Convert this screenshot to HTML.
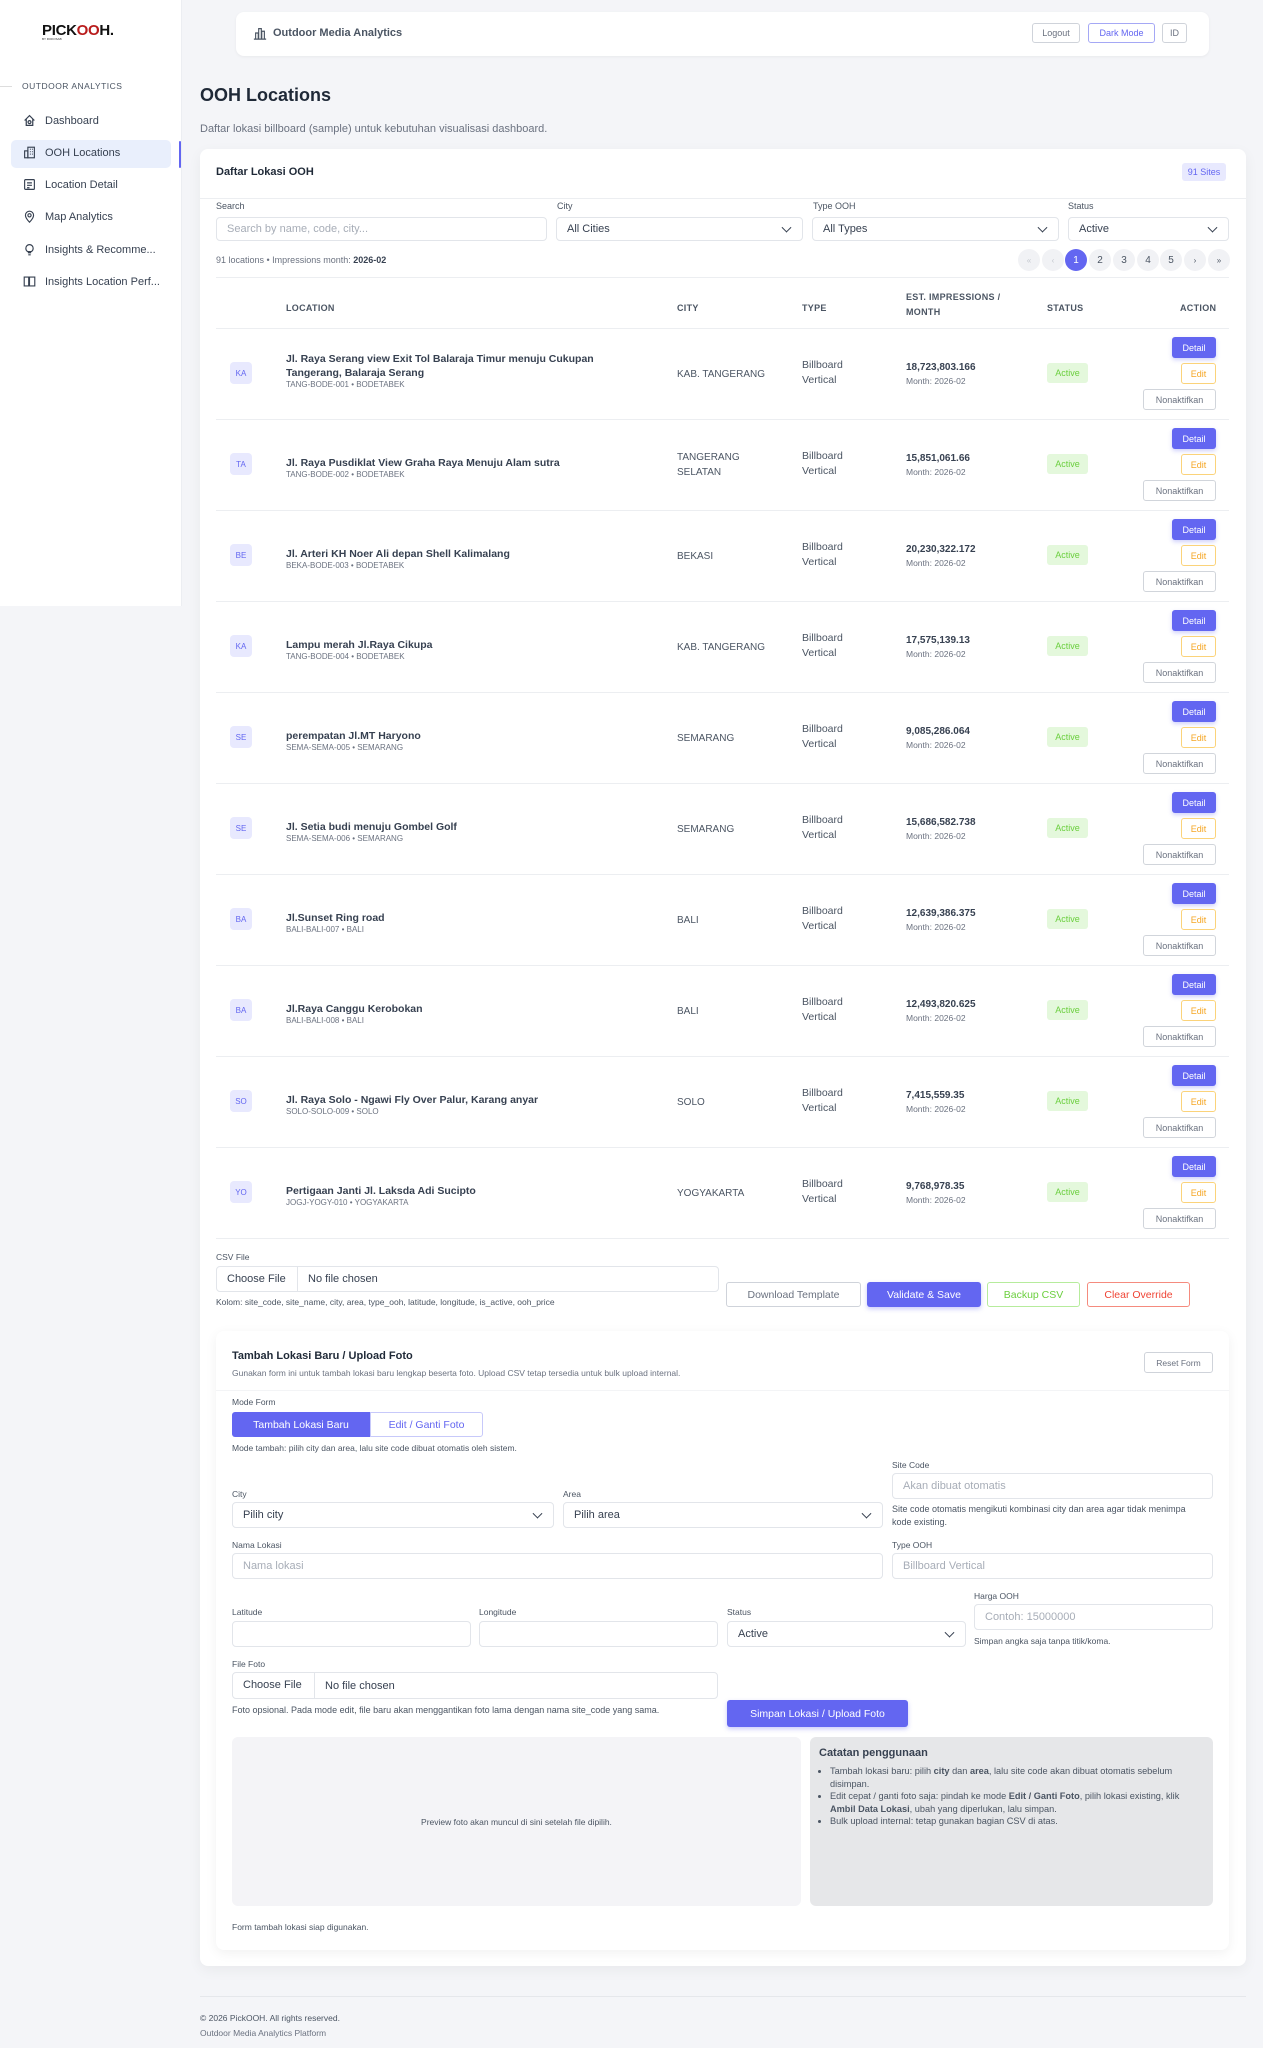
<!DOCTYPE html>
<html><head><meta charset="utf-8">
<style>
*{box-sizing:border-box;margin:0;padding:0}
body{width:1263px;height:2048px;background:#f4f5f8;font-family:"Liberation Sans",sans-serif;color:#374151;position:relative;overflow:hidden}
.a{position:absolute}
.sb{left:0;top:0;width:182px;height:606px;background:#fff;border-right:1px solid #eceef2}
.nav{left:23px;font-size:11px;color:#374151;display:flex;align-items:center;gap:9px}
.nav svg{width:13px;height:13px}
.card{background:#fff;border-radius:8px}
.btn{position:absolute;display:flex;align-items:center;justify-content:center;border-radius:3px;font-size:10px;background:#fff}
.lbl{position:absolute;font-size:9px;color:#4b5563}
.inp{position:absolute;border:1px solid #e2e5ea;border-radius:4px;background:#fff;font-size:11px;color:#374151;display:flex;align-items:center;padding-left:10px}
.ph{color:#a7adb7}
.chev{position:absolute;right:12px;top:50%;width:7px;height:7px;border-right:1.6px solid #374151;border-bottom:1.6px solid #374151;transform:translateY(-70%) rotate(45deg)}
.th{position:absolute;top:303px;font-size:9px;font-weight:bold;color:#4b5563;letter-spacing:.3px}
.pg{position:absolute;top:249px;width:22px;height:22px;border-radius:50%;background:#f1f2f5;font-size:10px;color:#4b5563;display:flex;align-items:center;justify-content:center}
.hr{position:absolute;height:1px;background:#eceef1}
.row .av{position:absolute;left:230px;width:22px;height:22px;border-radius:4px;background:#e8e9fe;color:#6366f1;font-size:8px;display:flex;align-items:center;justify-content:center}
.t{position:absolute;font-size:10px}
</style></head><body>

<div class="a sb"></div>
<div class="a" style="left:42px;top:22px;font-size:15px;font-weight:bold;letter-spacing:-0.3px;color:#111">PICK<span style="color:#b91c1c">OO</span>H.</div>
<div class="a" style="left:42px;top:37px;font-size:3px;color:#333">BY ROKOSAB</div>
<div class="a" style="left:0;top:86px;width:12px;height:1px;background:#ddd"></div>
<div class="a" style="left:22px;top:81px;font-size:8.5px;color:#4b5563;letter-spacing:.5px">OUTDOOR ANALYTICS</div>
<div class="a" style="left:11px;top:140px;width:160px;height:28px;background:#e9effc;border-radius:5px"></div>
<div class="a" style="left:179px;top:141px;width:2px;height:27px;background:#6366f1;border-radius:2px"></div>
<div class="a nav" style="top:114px"><svg viewBox="0 0 16 16" fill="none" stroke="#374151" stroke-width="1.5"><path d="M2 8L8 2l6 6M4 6.5V14h8V6.5"/><circle cx="8" cy="10" r="1.8"/></svg>Dashboard</div>
<div class="a nav" style="top:146px"><svg viewBox="0 0 16 16" fill="none" stroke="#374151" stroke-width="1.4"><rect x="6" y="1.5" width="8" height="13"/><rect x="2" y="6" width="4" height="8.5"/><path d="M8.5 4h1M11 4h1M8.5 7h1M11 7h1M8.5 10h1M11 10h1"/></svg>OOH Locations</div>
<div class="a nav" style="top:178px"><svg viewBox="0 0 16 16" fill="none" stroke="#374151" stroke-width="1.4"><rect x="2" y="2" width="12" height="12" rx="1"/><path d="M5 6h6M5 9h6M5 12h3"/></svg>Location Detail</div>
<div class="a nav" style="top:210px"><svg viewBox="0 0 16 16" fill="none" stroke="#374151" stroke-width="1.4"><path d="M8 15s5-5 5-8.5A5 5 0 003 6.5C3 10 8 15 8 15z"/><circle cx="8" cy="6.5" r="2"/></svg>Map Analytics</div>
<div class="a nav" style="top:243px"><svg viewBox="0 0 16 16" fill="none" stroke="#374151" stroke-width="1.4"><path d="M6 12h4M6.5 14.5h3M5.5 10.5C4 9.5 3.5 8 3.5 6.5a4.5 4.5 0 019 0c0 1.5-.5 3-2 4z"/></svg>Insights &amp; Recomme...</div>
<div class="a nav" style="top:275px"><svg viewBox="0 0 16 16" fill="none" stroke="#374151" stroke-width="1.4"><path d="M1.5 2.5h5.5v11H1.5zM8 2.5h6.5v11H8zM7 2.5v11"/></svg>Insights Location Perf...</div>

<div class="a card" style="left:236px;top:12px;width:973px;height:44px;box-shadow:0 1px 3px rgba(0,0,0,.05)"></div>
<svg class="a" style="left:253px;top:26px" width="14" height="14" viewBox="0 0 16 16" fill="none" stroke="#4b5563" stroke-width="1.3"><path d="M1 15h14M3 15V8h3v7M6.5 15V3h3v12M10 15V6h3v9"/></svg>
<div class="a" style="left:273px;top:27px;font-size:11px;font-weight:bold;color:#4b5563">Outdoor Media Analytics</div>
<div class="btn" style="left:1032px;top:23px;width:48px;height:20px;border:1px solid #cfd3da;color:#6b7280;font-size:9px">Logout</div>
<div class="btn" style="left:1088px;top:23px;width:67px;height:20px;border:1px solid #a5a8f5;color:#6366f1;font-size:9px">Dark Mode</div>
<div class="btn" style="left:1162px;top:23px;width:25px;height:20px;border:1px solid #cfd3da;color:#6b7280;font-size:9px">ID</div>

<div class="a" style="left:200px;top:85px;font-size:18px;font-weight:bold;color:#1f2937">OOH Locations</div>
<div class="a" style="left:200px;top:123px;font-size:11px;color:#6b7280">Daftar lokasi billboard (sample) untuk kebutuhan visualisasi dashboard.</div>

<div class="a card" style="left:200px;top:149px;width:1046px;height:1817px;box-shadow:0 4px 14px rgba(0,0,0,.05)"></div>
<div class="a" style="left:216px;top:166px;font-size:11px;font-weight:bold;color:#1f2937">Daftar Lokasi OOH</div>
<div class="a" style="left:1182px;top:163px;width:44px;height:18px;background:#e8e9fe;border-radius:3px;color:#6366f1;font-size:9px;display:flex;align-items:center;justify-content:center">91 Sites</div>
<div class="hr" style="left:200px;top:198px;width:1046px"></div>

<div class="lbl" style="left:216px;top:201px">Search</div>
<div class="inp" style="left:216px;top:217px;width:331px;height:24px"><span class="ph">Search by name, code, city...</span></div>
<div class="lbl" style="left:557px;top:201px">City</div>
<div class="inp" style="left:556px;top:217px;width:247px;height:24px">All Cities<i class="chev"></i></div>
<div class="lbl" style="left:813px;top:201px">Type OOH</div>
<div class="inp" style="left:812px;top:217px;width:247px;height:24px">All Types<i class="chev"></i></div>
<div class="lbl" style="left:1068px;top:201px">Status</div>
<div class="inp" style="left:1068px;top:217px;width:161px;height:24px">Active<i class="chev"></i></div>

<div class="a" style="left:216px;top:255px;font-size:9px;color:#6b7280">91 locations • Impressions month: <b style="color:#374151">2026-02</b></div>
<div class="pg" style="left:1018px;color:#c4c8cf;font-size:8px">«</div>
<div class="pg" style="left:1042px;color:#c4c8cf;font-size:8px">‹</div>
<div class="pg" style="left:1065px;background:#6366f1;color:#fff">1</div>
<div class="pg" style="left:1089px">2</div>
<div class="pg" style="left:1113px">3</div>
<div class="pg" style="left:1137px">4</div>
<div class="pg" style="left:1160px">5</div>
<div class="pg" style="left:1184px;font-size:8px">›</div>
<div class="pg" style="left:1208px;font-size:8px">»</div>
<div class="hr" style="left:216px;top:277px;width:1013px"></div>

<div class="th" style="left:286px">LOCATION</div>
<div class="th" style="left:677px">CITY</div>
<div class="th" style="left:802px">TYPE</div>
<div class="th" style="left:906px;top:290px;line-height:15px">EST. IMPRESSIONS /<br>MONTH</div>
<div class="th" style="left:1047px">STATUS</div>
<div class="th" style="left:1180px">ACTION</div>
<div class="hr" style="left:216px;top:328px;width:1013px"></div>

<div id="rows"></div>
<script>
var d=[["KA","Jl. Raya Serang view Exit Tol Balaraja Timur menuju Cukupan<br>Tangerang, Balaraja Serang","TANG-BODE-001 • BODETABEK","KAB. TANGERANG","18,723,803.166"],
["TA","Jl. Raya Pusdiklat View Graha Raya Menuju Alam sutra","TANG-BODE-002 • BODETABEK","TANGERANG<br>SELATAN","15,851,061.66"],
["BE","Jl. Arteri KH Noer Ali depan Shell Kalimalang","BEKA-BODE-003 • BODETABEK","BEKASI","20,230,322.172"],
["KA","Lampu merah Jl.Raya Cikupa","TANG-BODE-004 • BODETABEK","KAB. TANGERANG","17,575,139.13"],
["SE","perempatan Jl.MT Haryono","SEMA-SEMA-005 • SEMARANG","SEMARANG","9,085,286.064"],
["SE","Jl. Setia budi menuju Gombel Golf","SEMA-SEMA-006 • SEMARANG","SEMARANG","15,686,582.738"],
["BA","Jl.Sunset Ring road","BALI-BALI-007 • BALI","BALI","12,639,386.375"],
["BA","Jl.Raya Canggu Kerobokan","BALI-BALI-008 • BALI","BALI","12,493,820.625"],
["SO","Jl. Raya Solo - Ngawi Fly Over Palur, Karang anyar","SOLO-SOLO-009 • SOLO","SOLO","7,415,559.35"],
["YO","Pertigaan Janti Jl. Laksda Adi Sucipto","JOGJ-YOGY-010 • YOGYAKARTA","YOGYAKARTA","9,768,978.35"]];
var h="";
d.forEach(function(r,i){var c=373+91*i;var two=r[1].indexOf("<br>")>0;var nameTop=two?c-21:c-8;
h+='<div class="row"><div class="av" style="top:'+(c-11)+'px">'+r[0]+'</div>'+
'<div class="t" style="left:286px;top:'+nameTop+'px;font-weight:600;color:#374151;line-height:14px;font-size:10.5px">'+r[1]+'</div>'+
'<div class="t" style="left:286px;top:'+(nameTop+(two?28:14))+'px;font-size:8px;color:#6b7280">'+r[2]+'</div>'+
'<div class="t" style="left:677px;top:'+(r[3].indexOf("<br>")>0?c-14:c-6)+'px;color:#4b5563;line-height:15px">'+r[3]+'</div>'+
'<div class="t" style="left:802px;top:'+(c-15)+'px;color:#4b5563;line-height:15px;font-size:10.5px">Billboard<br>Vertical</div>'+
'<div class="t" style="left:906px;top:'+(c-11)+'px;font-weight:bold;color:#374151">'+r[4]+'</div>'+
'<div class="t" style="left:906px;top:'+(c+3)+'px;font-size:8.5px;color:#6b7280">Month: 2026-02</div>'+
'<div class="a" style="left:1047px;top:'+(c-10)+'px;width:41px;height:20px;background:#e4f8dc;color:#6bcf3e;font-size:9px;border-radius:3px;display:flex;align-items:center;justify-content:center">Active</div>'+
'<div class="btn" style="left:1172px;top:'+(c-36)+'px;width:44px;height:21px;background:#6366f1;color:#fff;font-size:9px;box-shadow:0 2px 4px rgba(99,102,241,.3)">Detail</div>'+
'<div class="btn" style="left:1181px;top:'+(c-10)+'px;width:35px;height:21px;border:1px solid #fbd37a;color:#f5a623;font-size:9px">Edit</div>'+
'<div class="btn" style="left:1143px;top:'+(c+16)+'px;width:73px;height:21px;border:1px solid #d1d5db;color:#6b7280;font-size:9px">Nonaktifkan</div>'+
'<div class="hr" style="left:216px;top:'+(c+46)+'px;width:1013px"></div></div>';});
document.getElementById("rows").innerHTML=h;
</script>

<div class="lbl" style="left:216px;top:1252px;font-size:8.5px">CSV File</div>
<div class="inp" style="left:216px;top:1266px;width:503px;height:26px;padding-left:0"><span style="display:inline-block;width:81px;height:100%;border-right:1px solid #e2e5ea;line-height:24px;padding-left:10px;color:#374151">Choose File</span><span style="padding-left:10px">No file chosen</span></div>
<div class="a" style="left:216px;top:1297px;font-size:8.5px;color:#4b5563">Kolom: site_code, site_name, city, area, type_ooh, latitude, longitude, is_active, ooh_price</div>
<div class="btn" style="left:726px;top:1282px;width:135px;height:25px;border:1px solid #cfd3da;color:#6b7280;font-size:10.5px">Download Template</div>
<div class="btn" style="left:867px;top:1282px;width:114px;height:25px;background:#6366f1;color:#fff;font-size:10.5px;box-shadow:0 2px 5px rgba(99,102,241,.35)">Validate &amp; Save</div>
<div class="btn" style="left:987px;top:1282px;width:93px;height:25px;border:1px solid #b6ec9c;color:#6bcf3e;font-size:10.5px">Backup CSV</div>
<div class="btn" style="left:1087px;top:1282px;width:103px;height:25px;border:1px solid #f58b7e;color:#ef4435;font-size:10.5px">Clear Override</div>

<div class="a card" style="left:216px;top:1331px;width:1013px;height:619px;box-shadow:0 3px 12px rgba(0,0,0,.06)"></div>
<div class="a" style="left:232px;top:1350px;font-size:11px;font-weight:bold;color:#1f2937">Tambah Lokasi Baru / Upload Foto</div>
<div class="a" style="left:232px;top:1368px;font-size:8.5px;color:#6b7280">Gunakan form ini untuk tambah lokasi baru lengkap beserta foto. Upload CSV tetap tersedia untuk bulk upload internal.</div>
<div class="btn" style="left:1144px;top:1352px;width:69px;height:21px;border:1px solid #cfd3da;color:#6b7280;font-size:8.5px">Reset Form</div>
<div class="hr" style="left:216px;top:1390px;width:1013px;background:#f3f4f6"></div>

<div class="lbl" style="left:232px;top:1397px;font-size:8.5px">Mode Form</div>
<div class="btn" style="left:232px;top:1412px;width:138px;height:25px;background:#6366f1;color:#fff;border-radius:3px 0 0 3px;font-size:10.5px">Tambah Lokasi Baru</div>
<div class="btn" style="left:370px;top:1412px;width:113px;height:25px;border:1px solid #c7c9fa;color:#6366f1;border-radius:0 3px 3px 0;font-size:10.5px">Edit / Ganti Foto</div>
<div class="a" style="left:232px;top:1443px;font-size:8.5px;color:#4b5563">Mode tambah: pilih city dan area, lalu site code dibuat otomatis oleh sistem.</div>

<div class="lbl" style="left:892px;top:1460px;font-size:8.5px">Site Code</div>
<div class="inp" style="left:892px;top:1473px;width:321px;height:26px"><span class="ph">Akan dibuat otomatis</span></div>
<div class="a" style="left:892px;top:1503px;width:300px;font-size:9px;line-height:13px;color:#4b5563">Site code otomatis mengikuti kombinasi city dan area agar tidak menimpa kode existing.</div>
<div class="lbl" style="left:232px;top:1489px;font-size:8.5px">City</div>
<div class="inp" style="left:232px;top:1502px;width:322px;height:26px">Pilih city<i class="chev"></i></div>
<div class="lbl" style="left:563px;top:1489px;font-size:8.5px">Area</div>
<div class="inp" style="left:563px;top:1502px;width:320px;height:26px">Pilih area<i class="chev"></i></div>

<div class="lbl" style="left:232px;top:1540px;font-size:8.5px">Nama Lokasi</div>
<div class="inp" style="left:232px;top:1553px;width:651px;height:26px"><span class="ph">Nama lokasi</span></div>
<div class="lbl" style="left:892px;top:1540px;font-size:8.5px">Type OOH</div>
<div class="inp" style="left:892px;top:1553px;width:321px;height:26px"><span class="ph">Billboard Vertical</span></div>

<div class="lbl" style="left:974px;top:1591px;font-size:8.5px">Harga OOH</div>
<div class="inp" style="left:974px;top:1604px;width:239px;height:26px"><span class="ph">Contoh: 15000000</span></div>
<div class="a" style="left:974px;top:1636px;font-size:8.5px;color:#4b5563">Simpan angka saja tanpa titik/koma.</div>
<div class="lbl" style="left:232px;top:1607px;font-size:8.5px">Latitude</div>
<div class="inp" style="left:232px;top:1621px;width:239px;height:26px"></div>
<div class="lbl" style="left:479px;top:1607px;font-size:8.5px">Longitude</div>
<div class="inp" style="left:479px;top:1621px;width:239px;height:26px"></div>
<div class="lbl" style="left:727px;top:1607px;font-size:8.5px">Status</div>
<div class="inp" style="left:727px;top:1621px;width:239px;height:26px">Active<i class="chev"></i></div>

<div class="lbl" style="left:232px;top:1659px;font-size:8.5px">File Foto</div>
<div class="inp" style="left:232px;top:1672px;width:486px;height:27px;padding-left:0"><span style="display:inline-block;width:82px;height:100%;border-right:1px solid #e2e5ea;line-height:25px;padding-left:10px;color:#374151">Choose File</span><span style="padding-left:10px">No file chosen</span></div>
<div class="a" style="left:232px;top:1703px;width:460px;font-size:9px;line-height:14px;color:#4b5563">Foto opsional. Pada mode edit, file baru akan menggantikan foto lama dengan nama site_code yang sama.</div>
<div class="btn" style="left:727px;top:1700px;width:181px;height:27px;background:#6366f1;color:#fff;font-size:10.5px;box-shadow:0 2px 5px rgba(99,102,241,.35)">Simpan Lokasi / Upload Foto</div>

<div class="a" style="left:232px;top:1737px;width:569px;height:169px;background:#f4f4f7;border-radius:6px;display:flex;align-items:center;justify-content:center;font-size:8.5px;color:#4b5563">Preview foto akan muncul di sini setelah file dipilih.</div>
<div class="a" style="left:810px;top:1737px;width:403px;height:169px;background:#e6e7e9;border-radius:6px;padding:10px 12px 0 9px">
<div style="font-size:11px;font-weight:bold;color:#374151;margin-bottom:6px">Catatan penggunaan</div>
<ul style="font-size:9.2px;line-height:12.5px;color:#4b5563;padding-left:11px">
<li>Tambah lokasi baru: pilih <b>city</b> dan <b>area</b>, lalu site code akan dibuat otomatis sebelum disimpan.</li>
<li>Edit cepat / ganti foto saja: pindah ke mode <b>Edit / Ganti Foto</b>, pilih lokasi existing, klik <b>Ambil Data Lokasi</b>, ubah yang diperlukan, lalu simpan.</li>
<li>Bulk upload internal: tetap gunakan bagian CSV di atas.</li></ul></div>
<div class="a" style="left:232px;top:1922px;font-size:8.5px;color:#4b5563">Form tambah lokasi siap digunakan.</div>

<div class="hr" style="left:200px;top:1996px;width:1046px;background:#e5e7eb"></div>
<div class="a" style="left:200px;top:2013px;font-size:8.5px;color:#4b5563">© 2026 PickOOH. All rights reserved.</div>
<div class="a" style="left:200px;top:2028px;font-size:8.5px;color:#6b7280">Outdoor Media Analytics Platform</div>
</body></html>
